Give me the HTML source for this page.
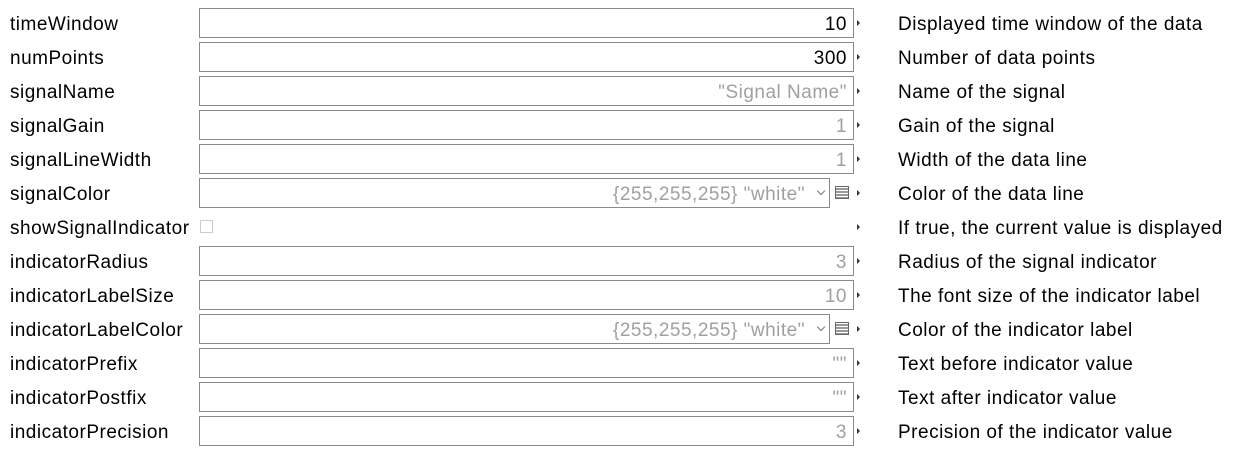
<!DOCTYPE html>
<html><head><style>
body{margin:0;background:#fff;width:1246px;height:460px;overflow:hidden;font-family:"Liberation Sans",sans-serif;font-size:19px;letter-spacing:0.5px;color:#000}
.r{position:absolute;left:0;width:1246px;height:34px}
.l{position:absolute;left:10px;top:6px;white-space:nowrap}
.b{position:absolute;left:199px;top:0;width:653px;height:28px;border:1px solid #8a8a8a;box-sizing:content-box}
.v{position:absolute;right:6px;top:5px;white-space:nowrap}
.g{color:#a0a0a0}
.a{position:absolute;left:857px;top:12px;width:0;height:0;border-top:3px solid transparent;border-bottom:3px solid transparent;border-left:3px solid #333}
.d{position:absolute;left:898px;top:6px;white-space:nowrap}
.cb{width:629px}
.chev{position:absolute;right:5px;top:9px;width:5px;height:5px;border-right:1px solid #777;border-bottom:1px solid #777;transform:rotate(45deg)}
.ic{position:absolute;left:835px;top:8px;width:12px;height:11px;border:1px solid #666;background:repeating-linear-gradient(#fff 0 1px,#999 1px 3px)}
.ck{position:absolute;left:200px;top:8px;width:11px;height:11px;border:1px solid #ccc}
</style></head><body>
<div class="r" style="top:8px"><div class="l">timeWindow</div><div class="b"><span class="v">10</span></div><div class="a"></div><div class="d">Displayed time window of the data</div></div>
<div class="r" style="top:42px"><div class="l">numPoints</div><div class="b"><span class="v">300</span></div><div class="a"></div><div class="d">Number of data points</div></div>
<div class="r" style="top:76px"><div class="l">signalName</div><div class="b"><span class="v g">"Signal Name"</span></div><div class="a"></div><div class="d">Name of the signal</div></div>
<div class="r" style="top:110px"><div class="l">signalGain</div><div class="b"><span class="v g">1</span></div><div class="a"></div><div class="d">Gain of the signal</div></div>
<div class="r" style="top:144px"><div class="l">signalLineWidth</div><div class="b"><span class="v g">1</span></div><div class="a"></div><div class="d">Width of the data line</div></div>
<div class="r" style="top:178px"><div class="l">signalColor</div><div class="b cb"><span class="v g" style="right:24px">{255,255,255} "white"</span><div class="chev"></div></div><div class="ic"></div><div class="a"></div><div class="d">Color of the data line</div></div>
<div class="r" style="top:212px"><div class="l">showSignalIndicator</div><div class="ck"></div><div class="a"></div><div class="d">If true, the current value is displayed</div></div>
<div class="r" style="top:246px"><div class="l">indicatorRadius</div><div class="b"><span class="v g">3</span></div><div class="a"></div><div class="d">Radius of the signal indicator</div></div>
<div class="r" style="top:280px"><div class="l">indicatorLabelSize</div><div class="b"><span class="v g">10</span></div><div class="a"></div><div class="d">The font size of the indicator label</div></div>
<div class="r" style="top:314px"><div class="l">indicatorLabelColor</div><div class="b cb"><span class="v g" style="right:24px">{255,255,255} "white"</span><div class="chev"></div></div><div class="ic"></div><div class="a"></div><div class="d">Color of the indicator label</div></div>
<div class="r" style="top:348px"><div class="l">indicatorPrefix</div><div class="b"><span class="v g">""</span></div><div class="a"></div><div class="d">Text before indicator value</div></div>
<div class="r" style="top:382px"><div class="l">indicatorPostfix</div><div class="b"><span class="v g">""</span></div><div class="a"></div><div class="d">Text after indicator value</div></div>
<div class="r" style="top:416px"><div class="l">indicatorPrecision</div><div class="b"><span class="v g">3</span></div><div class="a"></div><div class="d">Precision of the indicator value</div></div>
</body></html>
